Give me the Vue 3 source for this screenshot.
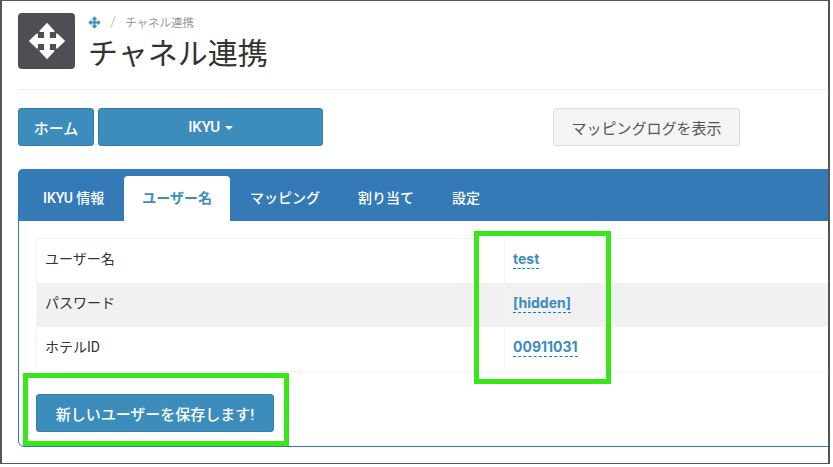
<script setup>
const tabs = ["IKYU 情報", "ユーザー名", "マッピング", "割り当て", "設定"];
const rows = [
  { label: "ユーザー名", value: "test" },
  { label: "パスワード", value: "[hidden]" },
  { label: "ホテルID", value: "00911031" },
];
const activeTab = 1;
</script>

<template>
  <div class="frame">
    <div class="page">
      <header class="head">
        <div class="tile">
          <svg width="46" height="46" viewBox="0 0 46 46">
            <path fill="#fff" d="M23 1 32 10.500 32 12 26.500 12 26.500 19.500 34 19.500 34 14 35.500 14 45 23 35.500 32 34 32 34 26.500 26.500 26.500 26.500 34 32 34 32 35.500 23 45 14 35.500 14 34 19.500 34 19.500 26.500 12 26.500 12 32 10.500 32 1 23 10.500 14 12 14 12 19.500 19.500 19.500 19.500 12 14 12 14 10.500Z" />
          </svg>
        </div>
        <div class="titles">
          <div class="crumbs">
            <svg width="13" height="13" viewBox="0 0 46 46">
              <path fill="#3c8dbc" d="M23 1 32 10.500 32 12 26.500 12 26.500 19.500 34 19.500 34 14 35.500 14 45 23 35.500 32 34 32 34 26.500 26.500 26.500 26.500 34 32 34 32 35.500 23 45 14 35.500 14 34 19.500 34 19.500 26.500 12 26.500 12 32 10.500 32 1 23 10.500 14 12 14 12 19.500 19.500 19.500 19.500 12 14 12 14 10.500Z" />
            </svg>
            <span class="slash">/</span>
            <span>チャネル連携</span>
          </div>
          <h1>チャネル連携</h1>
        </div>
      </header>

      <div class="actions">
        <button class="btn primary home">ホーム</button>
        <button class="btn primary ikyu">IKYU <i class="caret"></i></button>
        <button class="btn plain">マッピングログを表示</button>
      </div>

      <section class="panel">
        <nav class="tabbar">
          <a v-for="(t, i) in tabs" :key="t" class="tab" :class="{ active: i === activeTab }">{{ t }}</a>
        </nav>
        <div class="body">
          <div class="table">
            <div v-for="r in rows" :key="r.label" class="row">
              <div class="label">{{ r.label }}</div>
              <div class="value"><a>{{ r.value }}</a></div>
            </div>
          </div>
          <button class="btn primary save">新しいユーザーを保存します!</button>
        </div>
      </section>
    </div>

    <div class="mark mark-values"></div>
    <div class="mark mark-save"></div>
  </div>
</template>

<style>
html, body {
  background: #fff;
  overflow: hidden;
}
</style>

<style scoped>
.frame {
  position: relative;
  box-sizing: border-box;
  width: 830px;
  height: 464px;
  border: solid #555;
  border-width: 1px 2px 1px 2px;
  overflow: hidden;
  background: #fff;
  font-family: Roboto, "Noto Sans CJK JP", sans-serif;
  color: #333;
}
.page {
  padding: 12px 0 0 16px;
  width: 900px;
}
.head {
  display: flex;
  gap: 13px;
  width: 812px;
  height: 76px;
  border-bottom: 1px solid #eee;
}
.tile {
  width: 57px;
  height: 56px;
  background: #4d4f53;
  border-radius: 4px;
  display: flex;
  align-items: center;
  justify-content: center;
}
.tile svg {
  width: 38px;
  height: 38px;
}
.crumbs {
  display: flex;
  align-items: center;
  height: 18px;
  font-size: 11.500px;
  color: #999;
}
.slash {
  margin: 0 9px 0 9px;
  font-size: 15px;
  color: #ccc;
}
h1 {
  margin: 2px 0 0;
  font-size: 30px;
  line-height: 42px;
  font-weight: 400;
  color: #333;
}
.actions {
  display: flex;
  margin-top: 18px;
  gap: 4px;
}
.btn {
  box-sizing: border-box;
  height: 38px;
  border-radius: 3px;
  font-family: inherit;
  font-size: 15px;
  padding: 0;
  border: 1px solid transparent;
}
.primary {
  background: #3c8dbc;
  border-color: #367fa9;
  color: #fff;
  font-weight: 500;
}
.home {
  width: 76px;
}
.ikyu {
  width: 225px;
}
.caret {
  display: inline-block;
  width: 0;
  height: 0;
  margin-left: 1px;
  vertical-align: middle;
  border-top: 4px solid #fff;
  border-left: 4px solid transparent;
  border-right: 4px solid transparent;
}
.plain {
  width: 187px;
  margin-left: 226px;
  background: #f4f4f4;
  border-color: #ddd;
  color: #555;
}
.panel {
  margin-top: 23px;
  height: 278px;
  box-sizing: border-box;
  border: 1px solid #337ab7;
  border-radius: 6px 0 0 6px;
}
.tabbar {
  display: flex;
  height: 51px;
  background: #337ab7;
  border-radius: 5px 0 0 0;
  margin: -1px 0 0 -1px;
  padding: 7px 0 0 7px;
  box-sizing: content-box;
  height: 45px;
}
.tab {
  padding: 0 18px;
  line-height: 44px;
  font-size: 14px;
  font-weight: 500;
  color: #fff;
  margin-right: 2px;
}
.tab.active {
  background: #fff;
  color: #3c8dbc;
  font-weight: 700;
  border-radius: 4px 4px 0 0;
}
.body {
  padding: 17px 0 0 17px;
}
.table {
  width: 900px;
  border-top: 1px solid #f4f4f4;
  border-bottom: 1px solid #f4f4f4;
  border-left: 1px solid #f4f4f4;
}
.row {
  display: flex;
  height: 44px;
  align-items: stretch;
  font-size: 14px;
  color: #333;
}
.row:nth-child(2) {
  background: #f1f1f1;
}
.label {
  width: 459px;
  padding-left: 8px;
  line-height: 40px;
  border-right: 1px solid #f4f4f4;
}
.value {
  padding-left: 8px;
  line-height: 40px;
  font-family: Inter, sans-serif;
  font-weight: 700;
  color: #3c8dbc;
}
.value a {
  border-bottom: 1px dashed #0088cc;
  padding-bottom: 1px;
}
.save {
  display: block;
  margin-top: 22px;
  width: 238px;
  font-size: 15px;
}
.mark {
  position: absolute;
  box-sizing: border-box;
  border: 5px solid #39e619;
  pointer-events: none;
}
.mark-values {
  left: 472px;
  top: 230px;
  width: 137px;
  height: 153px;
}
.mark-save {
  left: 21px;
  top: 372px;
  width: 266px;
  height: 73px;
}
</style>
